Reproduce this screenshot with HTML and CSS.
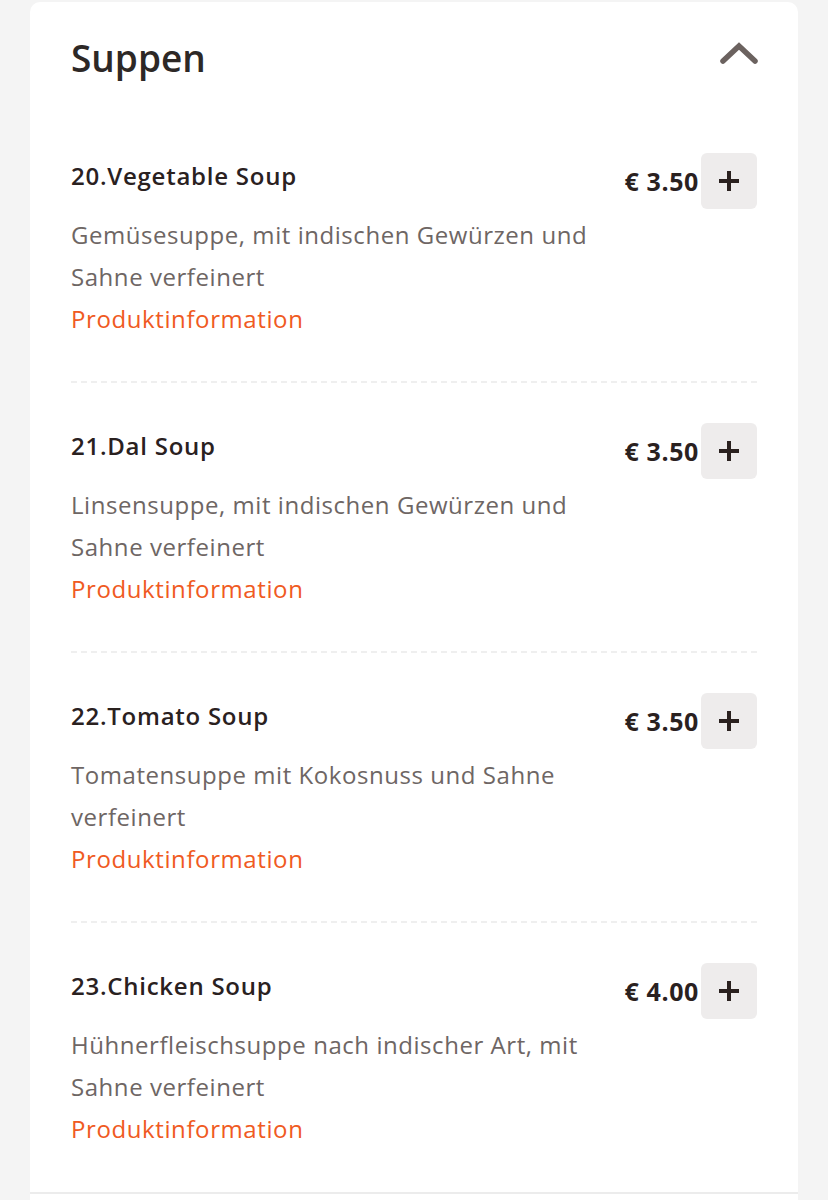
FILE: index.html
```html
<!DOCTYPE html>
<html lang="de">
  <head>
    <meta charset="UTF-8" />
    <meta name="viewport" content="width=device-width, initial-scale=1.0" />
    <title>Suppen</title>
    <link rel="stylesheet" href="styles.css">
  </head>
  <body>
    <main>
      <section class="category">
        <header class="category-head">
          <h2>Suppen</h2>
          <button class="toggle" aria-label="Einklappen">
            <svg width="40" height="24" viewBox="0 0 40 24">
              <path d="M4 19 L20 4 L36 19" fill="none" stroke="#6b625f" stroke-width="5.5" stroke-linecap="round" stroke-linejoin="miter" />
            </svg>
          </button>
        </header>
        <ul class="products">
          <li class="product">
            <div class="info">
              <h3>20.Vegetable Soup</h3>
              <p class="desc">Gemüsesuppe, mit indischen Gewürzen und Sahne verfeinert</p>
              <a href="#" class="more">Produktinformation</a>
            </div>
            <div class="buy">
              <span class="price">€ 3.50</span>
              <button class="add" aria-label="Hinzufügen">
                <svg width="24" height="24" viewBox="0 0 24 24"><path d="M12 2 V22 M2 12 H22" stroke="#2a211f" stroke-width="4" /></svg>
              </button>
            </div>
          </li>
          <li class="product">
            <div class="info">
              <h3>21.Dal Soup</h3>
              <p class="desc">Linsensuppe, mit indischen Gewürzen und Sahne verfeinert</p>
              <a href="#" class="more">Produktinformation</a>
            </div>
            <div class="buy">
              <span class="price">€ 3.50</span>
              <button class="add" aria-label="Hinzufügen">
                <svg width="24" height="24" viewBox="0 0 24 24"><path d="M12 2 V22 M2 12 H22" stroke="#2a211f" stroke-width="4" /></svg>
              </button>
            </div>
          </li>
          <li class="product">
            <div class="info">
              <h3>22.Tomato Soup</h3>
              <p class="desc">Tomatensuppe mit Kokosnuss und Sahne verfeinert</p>
              <a href="#" class="more">Produktinformation</a>
            </div>
            <div class="buy">
              <span class="price">€ 3.50</span>
              <button class="add" aria-label="Hinzufügen">
                <svg width="24" height="24" viewBox="0 0 24 24"><path d="M12 2 V22 M2 12 H22" stroke="#2a211f" stroke-width="4" /></svg>
              </button>
            </div>
          </li>
          <li class="product">
            <div class="info">
              <h3>23.Chicken Soup</h3>
              <p class="desc">Hühnerfleischsuppe nach indischer Art, mit Sahne verfeinert</p>
              <a href="#" class="more">Produktinformation</a>
            </div>
            <div class="buy">
              <span class="price">€ 4.00</span>
              <button class="add" aria-label="Hinzufügen">
                <svg width="24" height="24" viewBox="0 0 24 24"><path d="M12 2 V22 M2 12 H22" stroke="#2a211f" stroke-width="4" /></svg>
              </button>
            </div>
          </li>
        </ul>
      </section>
      <section class="category next"></section>
    </main>
  </body>
</html>
```

FILE: styles.css
```css
* {
  box-sizing: border-box;
  margin: 0;
  padding: 0;
}
body {
  background: #f4f4f4;
  font-family: "Open Sans", "Noto Sans", sans-serif;
  color: #2a211f;
}
main {
  padding: 2px 30px 0 30px;
}
.category {
  background: #fff;
  border-radius: 10px 10px 0 0;
  padding: 0 41px 0 41px;
  border-bottom: 2px solid #ececec;

  &.next {
    border-radius: 0;
    height: 40px;
    border-bottom: 0;
  }
}
.category-head {
  display: flex;
  justify-content: space-between;
  align-items: center;
  height: 112px;

  & h2 {
    font-size: 37px;
    font-weight: 600;
    color: #2d2826;
    margin-top: -2px;
  }
  & .toggle {
    border: 0;
    background: transparent;
    display: flex;
    margin: -9px -2px 0 0;
  }
}
.products {
  list-style: none;
}
.product {
  display: flex;
  justify-content: space-between;
  padding: 40px 0 41px 0;
  border-bottom: 2px dashed #efefef;

  &:first-child {
    padding-top: 39px;
  }
  &:last-child {
    border-bottom: 0;
    padding-bottom: 42px;
  }
  & h3 {
    font-size: 24px;
    font-weight: 600;
    letter-spacing: 0.75px;
    line-height: 46px;
    margin-bottom: 15px;
  }
  & .desc {
    font-size: 24px;
    letter-spacing: 0.55px;
    line-height: 42px;
    color: #6e6664;
    max-width: 540px;
  }
  & .more {
    font-size: 24px;
    letter-spacing: 0.6px;
    line-height: 42px;
    color: #f05a22;
    text-decoration: none;
  }
}
.buy {
  display: flex;
  align-items: center;
  align-self: flex-start;
  gap: 2px;

  & .price {
    font-size: 25px;
    font-weight: 700;
    letter-spacing: 0.6px;
  }
  & .add {
    width: 56px;
    height: 56px;
    border: 0;
    border-radius: 6px;
    background: #eeecec;
    display: flex;
    align-items: center;
    justify-content: center;
  }
}
```
